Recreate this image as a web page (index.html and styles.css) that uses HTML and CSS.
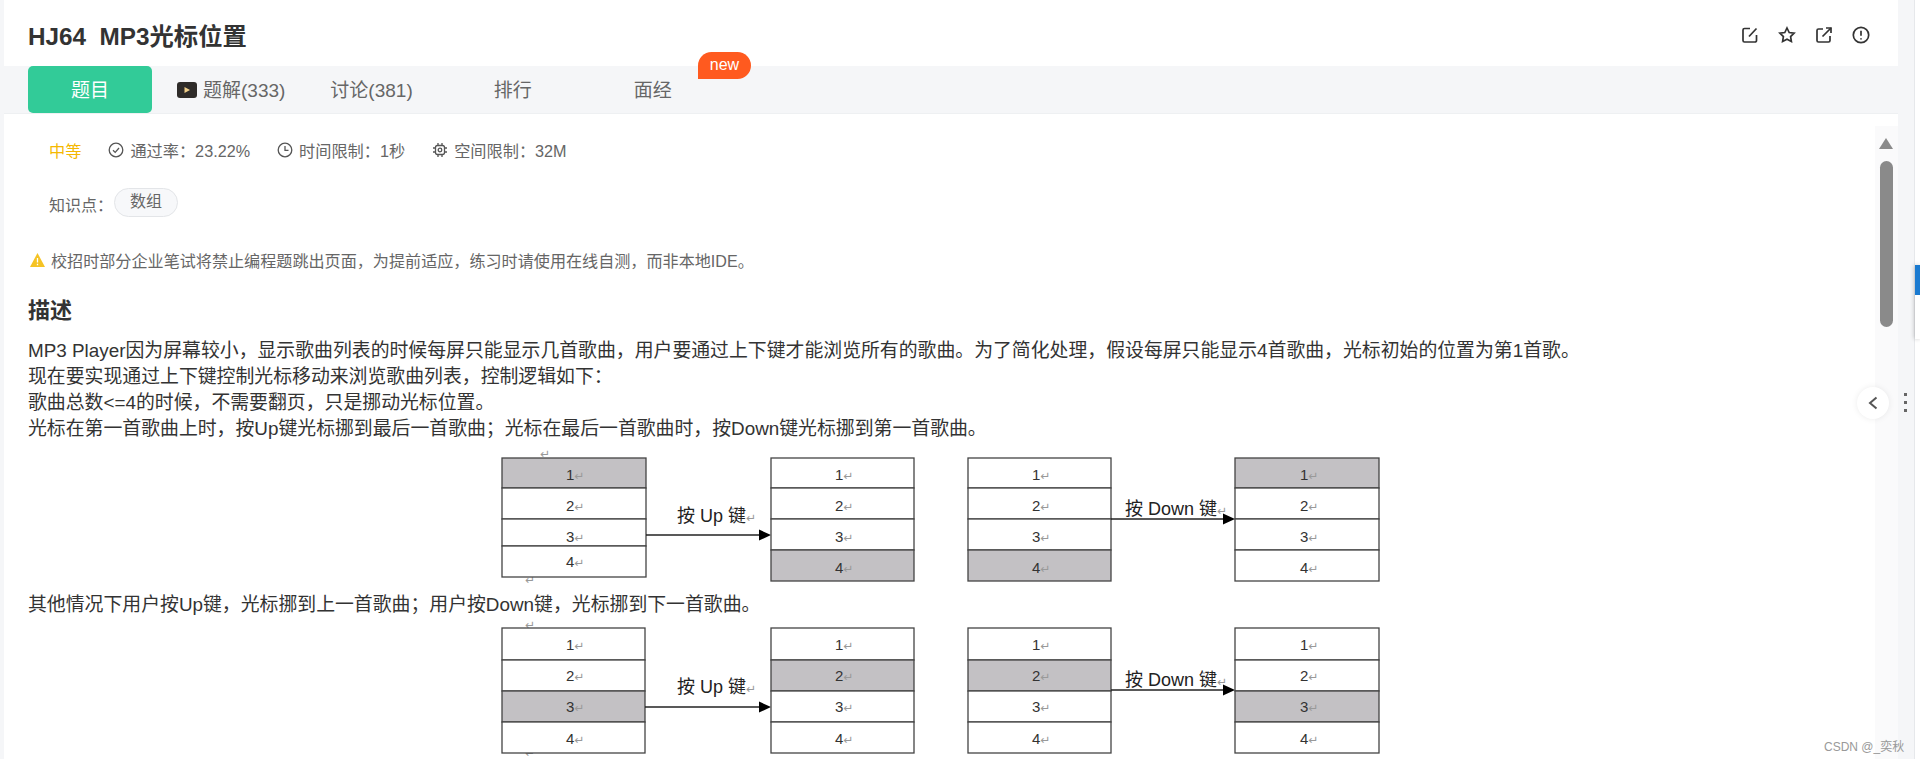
FILE: index.html
```html
<!DOCTYPE html>
<html lang="en">
<head>
  <meta charset="UTF-8" />
  <title>HJ64 MP3光标位置</title>
  <link rel="stylesheet" href="styles.css">
</head>
<body>
  <div class="page">
    <main class="panel">
      <header class="title-bar">
        <h1>HJ64&nbsp; MP3光标位置</h1>
        <div class="title-icons">
          <svg class="ti" viewBox="0 0 18 18"><path d="M9 2.500H3.500A1.500 1.500 0 0 0 2 4v10.500A1.500 1.500 0 0 0 3.500 16H14a1.500 1.500 0 0 0 1.500-1.500V9"/><path d="M15.500 2.500 8 10.500"/></svg>
          <svg class="ti" viewBox="0 0 18 18"><path d="M9 2l2.200 4.500 4.900.7-3.500 3.400.8 4.900L9 13.200l-4.400 2.300.8-4.900L1.900 7.200l4.900-.7z"/></svg>
          <svg class="ti" viewBox="0 0 18 18"><path d="M8 3H3.500A1.500 1.500 0 0 0 2 4.500v10A1.500 1.500 0 0 0 3.500 16h10a1.500 1.500 0 0 0 1.500-1.500V10"/><path d="M7.500 10.500 16 2"/><path d="M11 2h5v5"/></svg>
          <svg class="ti" viewBox="0 0 18 18"><circle cx="9" cy="9" r="7.700"/><path d="M9 4.800v5"/><path d="M9 12.200v1.200"/></svg>
        </div>
      </header>

      <nav class="tabs">
        <a class="tab tab-active">题目</a>
        <a class="tab tab-solution">
          <svg class="play" viewBox="0 0 20 16"><rect width="20" height="16" rx="3" fill="#2e2b29"/><path d="M7.500 5l5.500 3-5.500 3z" fill="#f0cf8a"/></svg>题解(333)
        </a>
        <a class="tab tab-discuss">讨论(381)</a>
        <a class="tab tab-rank">排行</a>
        <a class="tab tab-exp">面经</a>
        <span class="new-badge">new</span>
      </nav>

      <section class="body">
        <div class="meta-row">
          <span class="level">中等</span>
          <span class="meta-item">
            <svg class="mi" viewBox="0 0 16 16"><circle cx="8" cy="8" r="6.800"/><path d="M5 8.200l2.200 2.200L11 6"/></svg>通过率：23.22%
          </span>
          <span class="meta-item">
            <svg class="mi" viewBox="0 0 16 16"><circle cx="8" cy="8" r="6.800"/><path d="M8 4v4.300h3.500"/></svg>时间限制：1秒
          </span>
          <span class="meta-item">
            <svg class="mi" viewBox="0 0 16 16"><rect x="3.500" y="3.500" width="9" height="9" rx="2"/><circle cx="8" cy="8" r="1.800"/><path d="M6 1v2.500M10 1v2.500M6 12.500V15M10 12.500V15M1 6h2.500M1 10h2.500M12.500 6H15M12.500 10H15"/></svg>空间限制：32M
          </span>
        </div>

        <div class="tag-row">
          <span class="tag-label">知识点：</span>
          <span class="tag">数组</span>
        </div>

        <p class="notice">
          <svg class="warn" viewBox="0 0 15 14"><path d="M7.500 0 15 14H0z" fill="#f5c324"/><path d="M7.500 5v4.500M7.500 10.800v1.400" stroke="#fff" stroke-width="1.300"/></svg>校招时部分企业笔试将禁止编程题跳出页面，为提前适应，练习时请使用在线自测，而非本地IDE。
        </p>

        <h2>描述</h2>
        <div class="desc">
          MP3 Player因为屏幕较小，显示歌曲列表的时候每屏只能显示几首歌曲，用户要通过上下键才能浏览所有的歌曲。为了简化处理，假设每屏只能显示4首歌曲，光标初始的位置为第1首歌。<br>
          现在要实现通过上下键控制光标移动来浏览歌曲列表，控制逻辑如下：<br>
          歌曲总数&lt;=4的时候，不需要翻页，只是挪动光标位置。<br>
          光标在第一首歌曲上时，按Up键光标挪到最后一首歌曲；光标在最后一首歌曲时，按Down键光标挪到第一首歌曲。
        </div>

        <svg class="diagram diagram-a" viewBox="0 -6 920 146">
          <text class="ret" x="60" y="7">↵</text>
          <text class="ret" x="45" y="133">↵</text>

          <rect class="cell on" x="22" y="7" width="144" height="30"/>
          <rect class="cell" x="22" y="37" width="144" height="31"/>
          <rect class="cell" x="22" y="68" width="144" height="27"/>
          <rect class="cell" x="22" y="95" width="144" height="31"/>
          <text class="num" x="86" y="29">1<tspan class="ret">↵</tspan></text>
          <text class="num" x="86" y="60">2<tspan class="ret">↵</tspan></text>
          <text class="num" x="86" y="91">3<tspan class="ret">↵</tspan></text>
          <text class="num" x="86" y="116">4<tspan class="ret">↵</tspan></text>

          <path class="link" d="M166 84H281"/>
          <path class="head" d="M279 78.500 291 84 279 89.500z"/>
          <text class="key" x="197" y="71">按 Up 键<tspan class="ret">↵</tspan></text>

          <rect class="cell" x="291" y="7" width="143" height="30"/>
          <rect class="cell" x="291" y="37" width="143" height="31"/>
          <rect class="cell" x="291" y="68" width="143" height="31"/>
          <rect class="cell on" x="291" y="99" width="143" height="31"/>
          <text class="num" x="355" y="29">1<tspan class="ret">↵</tspan></text>
          <text class="num" x="355" y="60">2<tspan class="ret">↵</tspan></text>
          <text class="num" x="355" y="91">3<tspan class="ret">↵</tspan></text>
          <text class="num" x="355" y="122">4<tspan class="ret">↵</tspan></text>

          <rect class="cell" x="488" y="7" width="143" height="30"/>
          <rect class="cell" x="488" y="37" width="143" height="31"/>
          <rect class="cell" x="488" y="68" width="143" height="31"/>
          <rect class="cell on" x="488" y="99" width="143" height="31"/>
          <text class="num" x="552" y="29">1<tspan class="ret">↵</tspan></text>
          <text class="num" x="552" y="60">2<tspan class="ret">↵</tspan></text>
          <text class="num" x="552" y="91">3<tspan class="ret">↵</tspan></text>
          <text class="num" x="552" y="122">4<tspan class="ret">↵</tspan></text>

          <path class="link" d="M631 68H745"/>
          <path class="head" d="M743 62.500 755 68 743 73.500z"/>
          <text class="key" x="645" y="64">按 Down 键<tspan class="ret">↵</tspan></text>

          <rect class="cell on" x="755" y="7" width="144" height="30"/>
          <rect class="cell" x="755" y="37" width="144" height="31"/>
          <rect class="cell" x="755" y="68" width="144" height="31"/>
          <rect class="cell" x="755" y="99" width="144" height="31"/>
          <text class="num" x="820" y="29">1<tspan class="ret">↵</tspan></text>
          <text class="num" x="820" y="60">2<tspan class="ret">↵</tspan></text>
          <text class="num" x="820" y="91">3<tspan class="ret">↵</tspan></text>
          <text class="num" x="820" y="122">4<tspan class="ret">↵</tspan></text>
        </svg>

        <div class="desc">其他情况下用户按Up键，光标挪到上一首歌曲；用户按Down键，光标挪到下一首歌曲。</div>

        <svg class="diagram diagram-b" viewBox="0 -6 920 147">
          <text class="ret" x="45" y="9">↵</text>
          <text class="ret" x="45" y="137">↵</text>

          <rect class="cell" x="22" y="8" width="143" height="32"/>
          <rect class="cell" x="22" y="40" width="143" height="31"/>
          <rect class="cell on" x="22" y="71" width="143" height="31"/>
          <rect class="cell" x="22" y="102" width="143" height="31"/>
          <text class="num" x="86" y="30">1<tspan class="ret">↵</tspan></text>
          <text class="num" x="86" y="61">2<tspan class="ret">↵</tspan></text>
          <text class="num" x="86" y="92">3<tspan class="ret">↵</tspan></text>
          <text class="num" x="86" y="124">4<tspan class="ret">↵</tspan></text>

          <path class="link" d="M165 87H281"/>
          <path class="head" d="M279 81.500 291 87 279 92.500z"/>
          <text class="key" x="197" y="73">按 Up 键<tspan class="ret">↵</tspan></text>

          <rect class="cell" x="291" y="8" width="143" height="32"/>
          <rect class="cell on" x="291" y="40" width="143" height="31"/>
          <rect class="cell" x="291" y="71" width="143" height="31"/>
          <rect class="cell" x="291" y="102" width="143" height="31"/>
          <text class="num" x="355" y="30">1<tspan class="ret">↵</tspan></text>
          <text class="num" x="355" y="61">2<tspan class="ret">↵</tspan></text>
          <text class="num" x="355" y="92">3<tspan class="ret">↵</tspan></text>
          <text class="num" x="355" y="124">4<tspan class="ret">↵</tspan></text>

          <rect class="cell" x="488" y="8" width="143" height="32"/>
          <rect class="cell on" x="488" y="40" width="143" height="31"/>
          <rect class="cell" x="488" y="71" width="143" height="31"/>
          <rect class="cell" x="488" y="102" width="143" height="31"/>
          <text class="num" x="552" y="30">1<tspan class="ret">↵</tspan></text>
          <text class="num" x="552" y="61">2<tspan class="ret">↵</tspan></text>
          <text class="num" x="552" y="92">3<tspan class="ret">↵</tspan></text>
          <text class="num" x="552" y="124">4<tspan class="ret">↵</tspan></text>

          <path class="link" d="M631 70H745"/>
          <path class="head" d="M743 64.500 755 70 743 75.500z"/>
          <text class="key" x="645" y="66">按 Down 键<tspan class="ret">↵</tspan></text>

          <rect class="cell" x="755" y="8" width="144" height="32"/>
          <rect class="cell" x="755" y="40" width="144" height="31"/>
          <rect class="cell on" x="755" y="71" width="144" height="31"/>
          <rect class="cell" x="755" y="102" width="144" height="31"/>
          <text class="num" x="820" y="30">1<tspan class="ret">↵</tspan></text>
          <text class="num" x="820" y="61">2<tspan class="ret">↵</tspan></text>
          <text class="num" x="820" y="92">3<tspan class="ret">↵</tspan></text>
          <text class="num" x="820" y="124">4<tspan class="ret">↵</tspan></text>
        </svg>

        <!-- fake scrollbar -->
        <div class="scroll-track">
          <span class="scroll-up"></span>
          <span class="scroll-thumb"></span>
        </div>
      </section>
    </main>

    <aside class="rail">
      <span class="rail-dots"><i></i><i></i><i></i></span>
    </aside>
    <div class="edge"><span class="edge-tab"></span></div>

    <button class="collapse">
      <svg viewBox="0 0 12 14"><path d="M9.500 1.500 3 7l6.500 5.500"/></svg>
    </button>
    <span class="watermark">CSDN @_奕秋</span>
  </div>
</body>
</html>
```

FILE: styles.css
```css
html, body {
  margin: 0;
  height: 100%;
}
body {
  background: #f5f6f8;
  color: #333;
  font-family: "Liberation Sans", "Noto Sans CJK SC", sans-serif;
  overflow: hidden;
}
.page {
  position: relative;
  display: flex;
  height: 759px;
  padding-left: 4px;
  overflow: hidden;
}
.panel {
  width: 1894px;
  flex: none;
  display: flex;
  flex-direction: column;
  background: #fff;
}

/* title */
.title-bar {
  height: 66px;
  flex: none;
  box-sizing: border-box;
  display: flex;
  align-items: center;
  justify-content: space-between;
  padding: 2px 28px 0 24px;
}
h1 {
  margin: 0;
  font-size: 24.300px;
  font-weight: bold;
  color: #333;
}
.title-icons {
  display: flex;
  gap: 19px;
  margin-top: 2px;
}
.ti {
  width: 18px;
  height: 18px;
  fill: none;
  stroke: #333;
  stroke-width: 1.700;
}

/* tabs */
.tabs {
  position: relative;
  height: 47px;
  flex: none;
  display: flex;
  align-items: center;
  padding-left: 24px;
  background: #f5f6f8;
  border-bottom: 1px solid #eef0f2;
  font-size: 19px;
  color: #666;
}
.tab {
  display: flex;
  align-items: center;
  height: 47px;
  padding-bottom: 3px;
  box-sizing: border-box;
}
.tab-active {
  width: 124px;
  justify-content: center;
  background: #32cb98;
  color: #fff;
  border-radius: 5px;
}
.tab-solution { margin-left: 25px; }
.tab-discuss { margin-left: 45px; }
.tab-rank { margin-left: 81px; }
.tab-exp { margin-left: 102px; }
.play {
  width: 20px;
  height: 16px;
  margin: 3px 6px 0 0;
}
.new-badge {
  position: absolute;
  left: 694px;
  top: -14px;
  width: 53px;
  height: 27px;
  background: #ff5a1f;
  border-radius: 14px 14px 14px 0;
  color: #fff;
  font-size: 16px;
  line-height: 26px;
  text-align: center;
}

/* problem body */
.body {
  position: relative;
  flex: 1;
  min-height: 0;
  padding: 0 46px 0 24px;
  overflow: hidden;
}
.meta-row {
  display: flex;
  align-items: center;
  height: 20px;
  margin-top: 26px;
  padding-left: 21px;
  font-size: 16.200px;
  color: #666;
}
.level {
  color: #f5b800;
  margin-right: 27px;
}
.meta-item {
  display: flex;
  align-items: center;
  margin-right: 27px;
}
.mi {
  width: 16px;
  height: 16px;
  margin-right: 6px;
  fill: none;
  stroke: #555;
  stroke-width: 1.300;
}
.tag-row {
  display: flex;
  align-items: center;
  height: 30px;
  margin-top: 27px;
  padding-left: 21px;
  font-size: 16px;
  color: #666;
}
.tag-label { margin-top: 3px; }
.tag {
  width: 64px;
  height: 29px;
  margin-left: 1px;
  box-sizing: border-box;
  border: 1px solid #e3e5e8;
  border-radius: 15px;
  background: #f7f8fa;
  text-align: center;
  line-height: 26px;
}
.notice {
  display: flex;
  align-items: center;
  height: 20px;
  margin: 33px 0 0 2px;
  font-size: 16.100px;
  color: #666;
}
.warn {
  width: 15px;
  height: 14px;
  margin-right: 6px;
}
h2 {
  margin: 26px 0 0;
  height: 30px;
  font-size: 22px;
  line-height: 30px;
  font-weight: bold;
  color: #333;
}
.desc {
  margin-top: 12px;
  font-size: 18.870px;
  line-height: 26px;
  color: #333;
}
.diagram {
  display: block;
  width: 920px;
  margin: 0 auto;
}
.diagram-a { height: 146px; margin-top: 3px; }
.diagram + .desc { margin-top: 1px; }
.diagram-b { height: 147px; margin-top: -4px; }

.cell {
  fill: #fff;
  stroke: #444;
  stroke-width: 1.300;
}
.cell.on { fill: #c3c1c4; }
.num {
  font-size: 15px;
  fill: #333;
}
.ret {
  font-size: 12px;
  fill: #999;
  font-family: "DejaVu Sans", sans-serif;
}
.key {
  font-size: 18px;
  fill: #222;
}
.link {
  fill: none;
  stroke: #222;
  stroke-width: 1.300;
}
.head { fill: #000; }

/* scrollbar */
.scroll-track {
  position: absolute;
  top: 12px;
  right: 0;
  bottom: 0;
  width: 23px;
  background: #fafafb;
}
.scroll-up {
  position: absolute;
  top: 12px;
  left: 4px;
  border: 7.500px solid transparent;
  border-top: 0;
  border-bottom: 11px solid #8a8a8a;
}
.scroll-thumb {
  position: absolute;
  top: 35px;
  left: 5px;
  width: 13px;
  height: 166px;
  background: #8a8a8a;
  border-radius: 7px;
}

/* right rail */
.rail {
  position: relative;
  width: 16px;
  flex: none;
  background: #f5f6f8;
  border-right: 1px solid #e6e8eb;
}
.rail-dots {
  position: absolute;
  left: 6px;
  top: 393px;
  display: flex;
  flex-direction: column;
  gap: 5px;
}
.rail-dots i {
  width: 3px;
  height: 3px;
  background: #666;
}
.edge {
  flex: 1;
  position: relative;
  background: #fff;
}
.edge-tab {
  position: absolute;
  left: 0;
  top: 265px;
  width: 6px;
  height: 74px;
  background: linear-gradient(#1a7ad0 30px, #fff 30px);
  box-shadow: -1px 0 4px rgba(0, 0, 0, .2);
}
.collapse {
  position: absolute;
  left: 1857px;
  top: 387px;
  width: 32px;
  height: 32px;
  padding: 0;
  border: none;
  border-radius: 50%;
  background: #fff;
  box-shadow: 0 0 6px rgba(0, 0, 0, .08);
  display: flex;
  align-items: center;
  justify-content: center;
}
.collapse svg {
  width: 12px;
  height: 14px;
  fill: none;
  stroke: #555;
  stroke-width: 2;
}
.watermark {
  position: absolute;
  left: 1824px;
  top: 737px;
  font-size: 12px;
  color: #999;
}
```
